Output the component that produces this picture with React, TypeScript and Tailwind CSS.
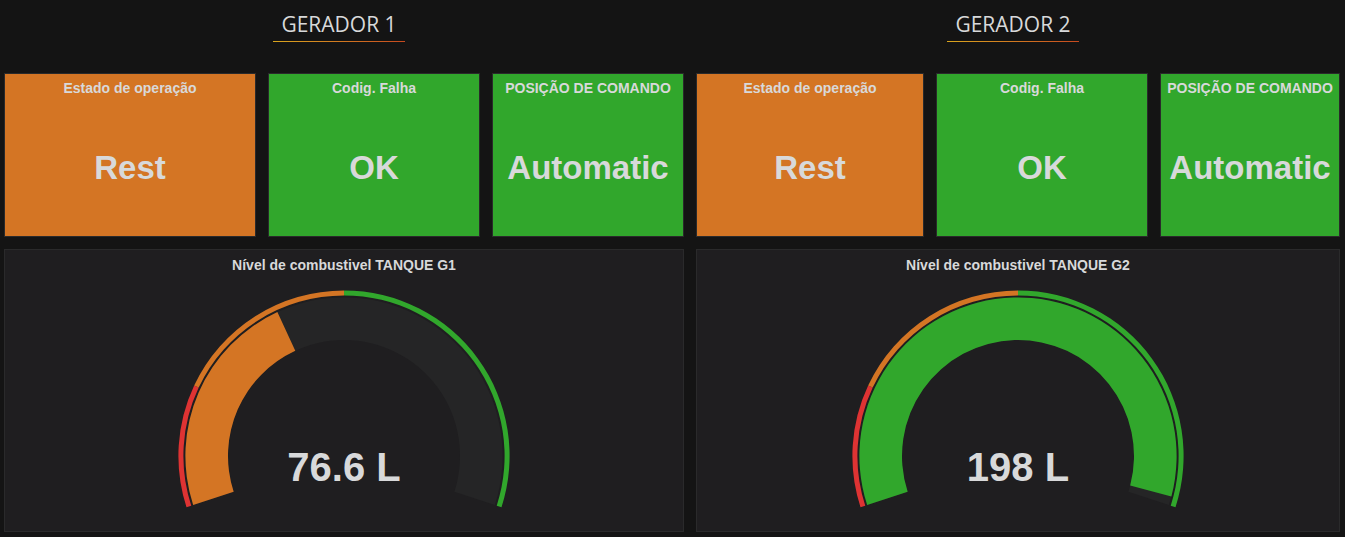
const ORANGE = '#d47524';
const GREEN = '#31a72c';
const RED = '#de3333';

// Gauge geometry follows the flot gauge used by the panel: 216deg sweep
const START = 162;
const SWEEP = 216;

function pt(cx: number, cy: number, r: number, deg: number) {
  const a = (deg * Math.PI) / 180;
  return [cx + r * Math.cos(a), cy + r * Math.sin(a)];
}

function sector(cx: number, cy: number, r1: number, r2: number, from: number, to: number) {
  const a0 = START + SWEEP * from;
  const a1 = START + SWEEP * to;
  const large = a1 - a0 > 180 ? 1 : 0;
  const [x0, y0] = pt(cx, cy, r2, a0);
  const [x1, y1] = pt(cx, cy, r2, a1);
  const [x2, y2] = pt(cx, cy, r1, a1);
  const [x3, y3] = pt(cx, cy, r1, a0);
  return `M${x0} ${y0} A${r2} ${r2} 0 ${large} 1 ${x1} ${y1} L${x2} ${y2} A${r1} ${r1} 0 ${large} 0 ${x3} ${y3} Z`;
}

function Gauge({ fraction, color, label }: { fraction: number; color: string; label: string }) {
  const cx = 170;
  const cy = 170;
  return (
    <svg width="340" height="230" viewBox="0 0 340 230" className="mt-[13px] block">
      {/* threshold markers */}
      <path d={sector(cx, cy, 160.6, 165.6, 0, 0.2)} fill={RED} />
      <path d={sector(cx, cy, 160.6, 165.6, 0.2, 0.5)} fill={ORANGE} />
      <path d={sector(cx, cy, 160.6, 165.6, 0.5, 1)} fill={GREEN} />
      {/* gauge band */}
      <path d={sector(cx, cy, 116, 158.6, 0, 1)} fill="#252526" />
      <path d={sector(cx, cy, 116, 158.6, 0, fraction)} fill={color} />
      <text
        x={cx}
        y={195}
        textAnchor="middle"
        fill="#d8d9da"
        fontSize="40"
        fontWeight="bold"
        fontFamily="'Liberation Sans', Arial, sans-serif"
      >
        {label}
      </text>
    </svg>
  );
}

function StatCard({ title, value, bg, width }: { title: string; value: string; bg: string; width: string }) {
  return (
    <div className={`${width} ${bg} h-[164px] border border-[#2a2a2b] flex flex-col items-center text-[#d8d9da]`}>
      <p className="pt-[6px] text-[14px] leading-4 font-bold whitespace-nowrap">{title}</p>
      <p className="mt-[53px] text-[33px] leading-[38px] font-bold whitespace-nowrap">{value}</p>
    </div>
  );
}

function Header({ title }: { title: string }) {
  return (
    <div className="h-[73px] flex justify-center pr-[10px]">
      <div className="pt-3 flex flex-col items-center">
        <h1 className="px-2 text-[21px] leading-6 text-[#d8d9da] font-['Open_Sans',sans-serif]">{title}</h1>
        <div className="mt-[5px] h-px w-full bg-gradient-to-r from-[#d9a51e] to-[#c6491f]" />
      </div>
    </div>
  );
}

function FuelPanel({ title, fraction, label, width }: { title: string; fraction: number; label: string; width: string }) {
  return (
    <div className={`${width} h-[283px] mt-3 bg-[#1f1e20] border border-[#2a2a2b] flex flex-col items-center`}>
      <p className="pt-[7px] text-[14px] leading-4 font-bold text-[#d8d9da]">{title}</p>
      <Gauge fraction={fraction} color={fraction > 0.5 ? GREEN : ORANGE} label={label} />
    </div>
  );
}

export default function App() {
  return (
    <div className="w-[1345px] h-[537px] bg-[#141414] px-1 flex gap-3 overflow-hidden font-['Liberation_Sans',Arial,sans-serif]">
      {/* Gerador 1 */}
      <div className="w-[680px] flex flex-col">
        <Header title="GERADOR 1" />
        <div className="flex gap-3">
          <StatCard title="Estado de operação" value="Rest" bg="bg-[#d47524]" width="w-[252px]" />
          <StatCard title="Codig. Falha" value="OK" bg="bg-[#31a72c]" width="w-[212px]" />
          <StatCard title="POSIÇÃO DE COMANDO" value="Automatic" bg="bg-[#31a72c]" width="w-[192px]" />
        </div>
        <FuelPanel title="Nível de combustivel TANQUE G1" fraction={0.385} label="76.6 L" width="w-[680px]" />
      </div>

      {/* Gerador 2 */}
      <div className="w-[644px] flex flex-col">
        <Header title="GERADOR 2" />
        <div className="flex gap-3">
          <StatCard title="Estado de operação" value="Rest" bg="bg-[#d47524]" width="w-[228px]" />
          <StatCard title="Codig. Falha" value="OK" bg="bg-[#31a72c]" width="w-[212px]" />
          <StatCard title="POSIÇÃO DE COMANDO" value="Automatic" bg="bg-[#31a72c]" width="w-[180px]" />
        </div>
        <FuelPanel title="Nível de combustivel TANQUE G2" fraction={0.985} label="198 L" width="w-[644px]" />
      </div>
    </div>
  );
}
